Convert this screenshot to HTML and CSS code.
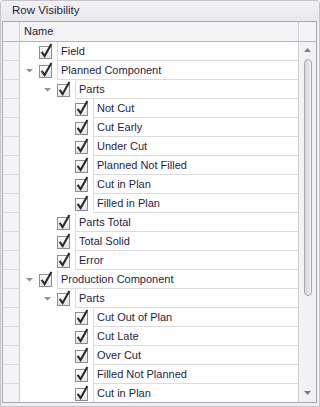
FILE: index.html
```html
<!DOCTYPE html>
<html lang="en">
<head>
  <meta charset="UTF-8" />
  <title>Row Visibility</title>
  <link rel="stylesheet" href="styles.css">
</head>
<body>
  <div class="panel">
    <div class="title">Row Visibility</div>

    <div class="grid">
      <div class="head">
        <div class="ind"></div>
        <div class="hname">Name</div>
        <div class="hscroll"></div>
      </div>

      <div class="body">
        <div class="rows" id="rows"></div>

        <!-- vertical scrollbar -->
        <div class="scroll">
          <svg class="arr up" width="7" height="4" viewBox="0 0 7 4"><polygon points="0,4 7,4 3.5,0" /></svg>
          <div class="thumb"></div>
          <svg class="arr down" width="7" height="4" viewBox="0 0 7 4"><polygon points="0,0 7,0 3.5,4" /></svg>
        </div>
      </div>
    </div>
  </div>

  <script>
    // [level, text, expanded]
    const items = [
      [0, "Field", false],
      [0, "Planned Component", true],
      [1, "Parts", true],
      [2, "Not Cut"],
      [2, "Cut Early"],
      [2, "Under Cut"],
      [2, "Planned Not Filled"],
      [2, "Cut in Plan"],
      [2, "Filled in Plan"],
      [1, "Parts Total"],
      [1, "Total Solid"],
      [1, "Error"],
      [0, "Production Component", true],
      [1, "Parts", true],
      [2, "Cut Out of Plan"],
      [2, "Cut Late"],
      [2, "Over Cut"],
      [2, "Filled Not Planned"],
      [2, "Cut in Plan"]
    ];

    const check = '<svg class="chk" width="16" height="18" viewBox="0 0 16 18">' +
      '<defs><linearGradient id="cb" x1="0" y1="0" x2="0" y2="1">' +
      '<stop offset="0" stop-color="#ffffff"/><stop offset="1" stop-color="#e4e4e6"/></linearGradient></defs>' +
      '<rect x="1.5" y="4.5" width="12" height="12" fill="url(#cb)" stroke="#8e8e92"/>' +
      '<path d="M3.6 9.8 L6.6 14 L13.4 2" fill="none" stroke="#2b2b2b" stroke-width="2.1"/></svg>';

    const expander = '<svg width="7" height="4" viewBox="0 0 7 4"><polygon points="0,0 7,0 3.5,3.5" fill="#8f8f94"/></svg>';

    const rows = document.getElementById("rows");
    items.forEach(function (it) {
      const row = document.createElement("div");
      row.className = "row lv" + it[0];
      row.innerHTML =
        '<div class="ind"></div>' +
        '<div class="tree">' +
          '<span class="exp">' + (it[2] ? expander : "") + '</span>' +
          '<span class="box">' + check + '</span>' +
        '</div>' +
        '<div class="cell">' + it[1] + '</div>';
      rows.appendChild(row);
    });
  </script>
</body>
</html>
```

FILE: styles.css
```css
body {
  margin: 0;
  background: #ffffff;
  font-family: "Liberation Sans", Arial, sans-serif;
  font-size: 11px;
  color: #1f1f3f;
}

.panel {
  width: 318px;
  height: 405px;
  border: 1px solid #c6c6ca;
  border-radius: 3px 3px 0 0;
  background: #f0f0f2;
  overflow: hidden;
}

.title {
  height: 20px;
  line-height: 19px;
  padding-left: 11px;
  background: linear-gradient(#f2f2f4, #e9e9ec);
  color: #1f1f4a;
  font-size: 11.5px;
}

.grid {
  margin-left: 1px;
  width: 313px;
  border: 1px solid #a9a9b1;
  background: #ffffff;
}

.head {
  display: flex;
  height: 19px;
  border-bottom: 1px solid #b4b4bc;
  background: #f4f4f6;
}

.ind {
  width: 16px;
  flex-shrink: 0;
  border-right: 1px solid #cfcfd5;
  background: #f4f4f6;
}

.hname {
  flex: 1;
  line-height: 19px;
  padding-left: 4px;
  border-right: 1px solid #cfcfd5;
}

.hscroll {
  width: 17px;
}

.body {
  display: flex;
  height: 360px;
  overflow: hidden;
}

.rows {
  flex: 1;
}

.row {
  display: flex;
  height: 19px;
}

.row .ind {
  border-bottom: 1px solid #dcdce0;
  height: 18px;
}

.tree {
  display: flex;
  flex-shrink: 0;
}

.lv1 .tree { padding-left: 18px; }
.lv2 .tree { padding-left: 36px; }

.exp {
  width: 18px;
  display: flex;
  align-items: center;
  justify-content: flex-start;
  padding-left: 6px;
  box-sizing: border-box;
}

.box {
  width: 19px;
  position: relative;
}

.chk {
  position: absolute;
  left: 0;
  top: 0;
}

.cell {
  flex: 1;
  height: 18px;
  line-height: 18px;
  padding-left: 3px;
  border-left: 1px solid #dcdce0;
  border-bottom: 1px solid #dcdce0;
  white-space: nowrap;
}

/* scrollbar */
.scroll {
  width: 17px;
  border-left: 1px solid #cfcfd5;
  background: #f2f2f4;
  position: relative;
}

.arr {
  position: absolute;
  left: 5px;
  fill: #7c7c82;
}

.arr.up { top: 6px; }
.arr.down { bottom: 7px; }

.thumb {
  position: absolute;
  left: 5px;
  top: 17px;
  width: 6px;
  height: 235px;
  border: 1px solid #a8a8b0;
  border-radius: 4px;
  background: linear-gradient(90deg, #d6d6dc, #efeff2);
}
```
